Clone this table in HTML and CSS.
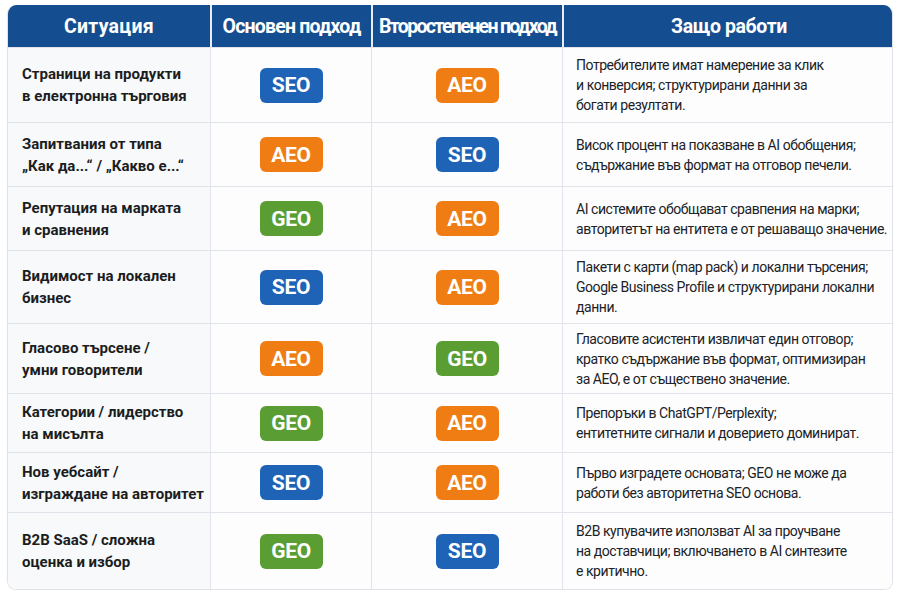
FILE: index.html
```html
<!DOCTYPE html>
<html lang="bg">
<head>
<meta charset="utf-8">
<link rel="stylesheet" href="styles.css">
</head>
<body>
<div class="table">
  <div class="th wide">Ситуация</div>
  <div class="th mid">Основен подход</div>
  <div class="th tight">Второстепенен подход</div>
  <div class="th">Защо работи</div>

  <div class="td sit">Страници на продукти<br>в електронна търговия</div>
  <div class="td badge-cell"><span class="badge seo">SEO</span></div>
  <div class="td badge-cell"><span class="badge aeo">AEO</span></div>
  <div class="td why">Потребителите имат намерение за клик<br>и конверсия; структурирани данни за<br>богати резултати.</div>

  <div class="td sit">Запитвания от типа<br>„Как да...“ / „Какво е...“</div>
  <div class="td badge-cell"><span class="badge aeo">AEO</span></div>
  <div class="td badge-cell"><span class="badge seo">SEO</span></div>
  <div class="td why">Висок процент на показване в AI обобщения;<br>съдържание във формат на отговор печели.</div>

  <div class="td sit">Репутация на марката<br>и сравнения</div>
  <div class="td badge-cell"><span class="badge geo">GEO</span></div>
  <div class="td badge-cell"><span class="badge aeo">AEO</span></div>
  <div class="td why">AI системите обобщават сравпения на марки;<br>авторитетът на ентитета е от решаващо значение.</div>

  <div class="td sit">Видимост на локален<br>бизнес</div>
  <div class="td badge-cell"><span class="badge seo">SEO</span></div>
  <div class="td badge-cell"><span class="badge aeo">AEO</span></div>
  <div class="td why">Пакети с карти (map pack) и локални търсения;<br>Google Business Profile и структурирани локални<br>данни.</div>

  <div class="td sit">Гласово търсене /<br>умни говорители</div>
  <div class="td badge-cell"><span class="badge aeo">AEO</span></div>
  <div class="td badge-cell"><span class="badge geo">GEO</span></div>
  <div class="td why">Гласовите асистенти извличат един отговор;<br>кратко съдържание във формат, оптимизиран<br>за AEO, е от съществено значение.</div>

  <div class="td sit">Категории / лидерство<br>на мисълта</div>
  <div class="td badge-cell"><span class="badge geo">GEO</span></div>
  <div class="td badge-cell"><span class="badge aeo">AEO</span></div>
  <div class="td why">Препоръки в ChatGPT/Perplexity;<br>ентитетните сигнали и доверието доминират.</div>

  <div class="td sit">Нов уебсайт /<br>изграждане на авторитет</div>
  <div class="td badge-cell"><span class="badge seo">SEO</span></div>
  <div class="td badge-cell"><span class="badge aeo">AEO</span></div>
  <div class="td why">Първо изградете основата; GEO не може да<br>работи без авторитетна SEO основа.</div>

  <div class="td sit">B2B SaaS / сложна<br>оценка и избор</div>
  <div class="td badge-cell"><span class="badge geo">GEO</span></div>
  <div class="td badge-cell"><span class="badge seo">SEO</span></div>
  <div class="td why">B2B купувачите използват AI за проучване<br>на доставчици; включването в AI синтезите<br>е критично.</div>
</div>
</body>
</html>
```

FILE: styles.css
```css
html, body {
  margin: 0;
  padding: 0;
  background: #ffffff;
}

body {
  padding: 5px 7px 0 7px;
  font-family: Roboto, "Noto Sans", "Liberation Sans", sans-serif;
}

.table {
  width: 886px;
  display: grid;
  grid-template-columns: 202px 161px 191px 332px;
  grid-template-rows: 42px 75px 64px 64px 73px 70px 59px 60px 77px;
  border: 1px solid #dfe3e9;
  border-top: none;
  border-radius: 9px;
  overflow: hidden;
  box-sizing: border-box;
  box-shadow: 0 1px 2px rgba(0, 0, 0, 0.04);
}

.th {
  background: #154e90;
  color: #ffffff;
  font-weight: 700;
  font-size: 19.5px;
  letter-spacing: -0.4px;
  display: flex;
  align-items: center;
  justify-content: center;
  border-left: 2px solid #e8edf3;
  white-space: nowrap;
}

.th:first-child {
  border-left: none;
}

.th.wide {
  letter-spacing: 0.3px;
}

.th.mid {
  letter-spacing: -0.8px;
}

.th.tight {
  letter-spacing: -1.65px;
}

.td {
  border-top: 1px solid #e1e5eb;
  border-left: 1px solid #e1e5eb;
  background: #fdfdfe;
  display: flex;
  align-items: center;
  box-sizing: border-box;
}

.sit {
  border-left: none;
  background: #f8f9fb;
  padding-left: 14px;
  font-weight: 700;
  font-size: 15px;
  line-height: 22px;
  color: #1b1d21;
}

.badge-cell {
  justify-content: center;
}

.badge {
  display: inline-flex;
  align-items: center;
  justify-content: center;
  width: 63px;
  height: 35px;
  border-radius: 6px;
  color: #ffffff;
  font-weight: 700;
  font-size: 21px;
  letter-spacing: -0.3px;
}

.seo { background: #1e63b6; }
.aeo { background: #ef7d13; }
.geo { background: #5a9e33; }

.why {
  padding-left: 13px;
  font-size: 14px;
  line-height: 20px;
  letter-spacing: -0.45px;
  color: #202226;
  white-space: nowrap;
}
```
